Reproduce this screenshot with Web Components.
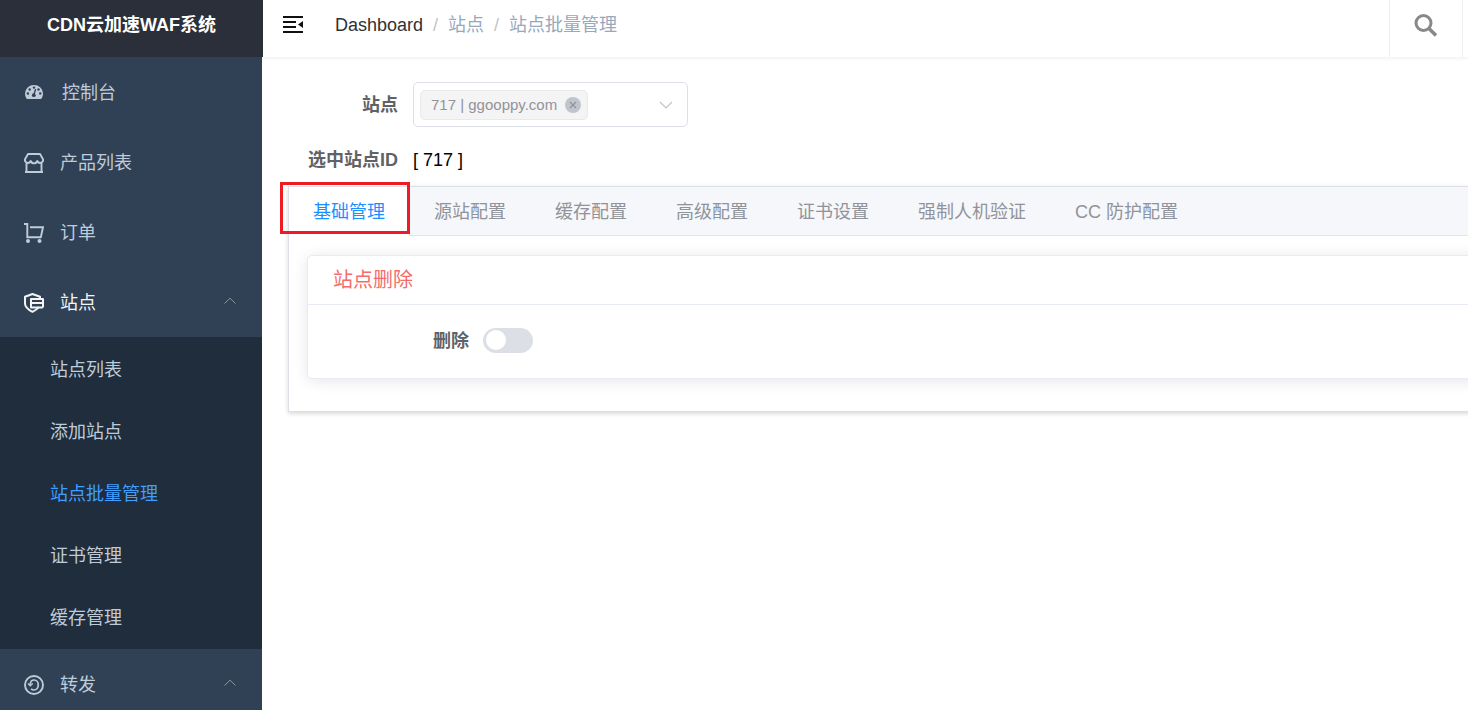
<!DOCTYPE html>
<html lang="zh-CN">
<head>
<meta charset="utf-8">
<meta name="viewport" content="width=device-width, initial-scale=1">
<title>CDN云加速WAF系统</title>
<style>
  body {
    margin: 0;
    color: #606266;
    font-family: "Liberation Sans", "Noto Sans CJK SC", sans-serif;
    font-size: 18px;
    line-height: 24px;
  }
</style>
</head>
<body>
<waf-app>
  <waf-sidebar slot="sidebar" title="CDN云加速WAF系统">
    <waf-menu-item icon="dashboard" label="控制台"></waf-menu-item>
    <waf-menu-item icon="shop" label="产品列表"></waf-menu-item>
    <waf-menu-item icon="cart" label="订单"></waf-menu-item>
    <waf-submenu icon="site" label="站点" open>
      <waf-submenu-item label="站点列表"></waf-submenu-item>
      <waf-submenu-item label="添加站点"></waf-submenu-item>
      <waf-submenu-item label="站点批量管理" active></waf-submenu-item>
      <waf-submenu-item label="证书管理"></waf-submenu-item>
      <waf-submenu-item label="缓存管理"></waf-submenu-item>
    </waf-submenu>
    <waf-submenu icon="forward" label="转发"></waf-submenu>
  </waf-sidebar>
  <waf-navbar slot="navbar"></waf-navbar>
  <waf-site-form></waf-site-form>
  <waf-tabs>
    <waf-card title="站点删除">
      <waf-switch label="删除"></waf-switch>
    </waf-card>
  </waf-tabs>
</waf-app>

<script>
const icons = {
  dashboard: `<svg width="22" height="20" viewBox="0 0 22 20">
    <path fill="currentColor" d="M1 10.500a9 8.500 0 0 1 18 0c0 1.800-.5 3.400-1.300 4.800-.2.400-.5.600-.9.600H3.200c-.4 0-.7-.2-.9-.6A9 9 0 0 1 1 10.500z"/>
    <g fill="#304156"><circle cx="3.900" cy="10.500" r="1.200"/><circle cx="5.700" cy="6.500" r="1.200"/><circle cx="10" cy="4.600" r="1.200"/><circle cx="14.500" cy="6.500" r="1.200"/><circle cx="16.200" cy="10.500" r="1.200"/><circle cx="9.800" cy="12.200" r="1.900"/></g>
    <path d="M9.800 12l1.700-5.500" stroke="#304156" stroke-width="1.300" stroke-linecap="round"/></svg>`,
  shop: `<svg width="20" height="20" viewBox="0 0 20 20" fill="none" stroke="currentColor" stroke-width="1.900" stroke-linejoin="round">
    <path d="M3.400 9.800C1.500 9.500.6 8 1 6.200L4 1h12l3 5.200c.4 1.800-.5 3.300-2.400 3.600"/>
    <path d="M3 9.800c1.900.6 3-.3 3.700-1.800.7 1.600 1.800 2.400 3.300 2.400s2.600-.8 3.300-2.400c.7 1.500 1.800 2.400 3.700 1.800"/>
    <path d="M2.500 9.500V19M17.500 9.500V19M1 19h18"/></svg>`,
  cart: `<svg width="20" height="20" viewBox="0 0 20 20" fill="none" stroke="currentColor" stroke-width="1.900">
    <path d="M0 1h3.300v13.200h13.500L19 4.300H6"/>
    <g fill="currentColor" stroke="none"><circle cx="4" cy="18" r="2"/><circle cx="15.500" cy="18" r="2"/></g></svg>`,
  site: `<svg width="20" height="20" viewBox="0 0 20 20" fill="none" stroke="currentColor" stroke-width="2" stroke-linejoin="round">
    <path d="M16 5.500V3.800L8.500 1 1 3.800v6.700c0 3.700 3.500 6.300 7.500 8.300 3-1.400 5-2.900 6.500-4.800"/>
    <path d="M7 6h12v7.500L18 14.500H7zM7 10h12"/></svg>`,
  forward: `<svg width="20" height="20" viewBox="0 0 20 20" fill="none" stroke="currentColor" stroke-width="1.900">
    <circle cx="10" cy="10" r="9"/>
    <path d="M6.200 9.500C6.400 6.500 8 5 10 5c2.600 0 4.300 2.200 4.300 5s-1.700 5-4.300 5c-1.200 0-2.200-.5-2.900-1.300" stroke-width="1.700"/>
    <path d="M4 8.500l2.200 2.300L8.700 8.500" stroke-width="1.500"/></svg>`,
  arrow: `<svg class="arrow" width="12" height="8" viewBox="0 0 12 8" fill="none" stroke="#909399"><path d="M.5 6.500L6 1.200l5.500 5.300"/></svg>`,
  fold: `<svg width="20" height="18" viewBox="0 0 20 18"><path fill="#111" d="M0 0h20v2H0zM0 5h13v2H0zM0 10h13v2H0zM0 15h20v2H0zM20 5v7l-5-3.500z"/></svg>`,
  search: `<svg width="24" height="24" viewBox="0 0 24 24" fill="none" stroke="#888"><circle cx="9.500" cy="9" r="7.500" stroke-width="3"/><path d="M15 14.500l7 7" stroke-width="3.600"/></svg>`,
};

class WafElement extends HTMLElement {
  constructor() {
    super();
    this.attachShadow({mode: 'open'});
  }

  connectedCallback() {
    const template = document.createElement('template');
    template.innerHTML = `<style>* { box-sizing: border-box; }</style>` + this.render();
    this.shadowRoot.replaceChildren(template.content.cloneNode(true));
  }

  get label() { return this.getAttribute('label') || '' }
}

class WafApp extends WafElement {
  render() {
    return `
      <style>
        :host {
          display: grid;
          grid-template-columns: 262px minmax(0, 1fr);
          height: 100vh;
          overflow: hidden;
          background: #fff;
        }
        .main {
          min-width: 0;
          overflow: hidden;
        }
        .content {
          padding: 25px 0 25px 26px;
        }
      </style>
      <slot name="sidebar"></slot>
      <div class="main">
        <slot name="navbar"></slot>
        <main class="content"><slot></slot></main>
      </div>
    `;
  }
}

class WafSidebar extends WafElement {
  render() {
    return `
      <style>
        :host {
          display: block;
          position: relative;
          z-index: 1;
          min-height: 0;
          background: #304156;
          color: #bfcbd9;
        }
        .logo {
          display: block;
          width: calc(100% + 1px);
          height: 57px;
          background: #2b2f3a;
          color: #fff;
          font-weight: bold;
          line-height: 50px;
          text-align: center;
          text-decoration: none;
        }
        nav {
          height: calc(100vh - 57px);
          overflow: hidden;
        }
      </style>
      <a class="logo" href="#">${this.getAttribute('title')}</a>
      <nav><slot></slot></nav>
    `;
  }
}

const itemStyle = `
  <style>
    :host {
      display: block;
    }
    .item {
      display: flex;
      align-items: center;
      gap: 16px;
      width: 100%;
      height: 70px;
      padding: 2px 26px 0 24px;
      border: 0;
      background: none;
      color: inherit;
      font: inherit;
      text-align: left;
      text-decoration: none;
      cursor: pointer;
    }
    .label {
      flex: 1;
    }
    svg {
      flex: none;
    }
    .arrow {
      margin-bottom: 4px;
    }
  </style>
`;

class WafMenuItem extends WafElement {
  render() {
    return `
      ${itemStyle}
      <a class="item" href="#">${icons[this.getAttribute('icon')]}<span class="label">${this.label}</span></a>
    `;
  }
}

class WafSubmenu extends WafElement {
  render() {
    const open = this.hasAttribute('open');
    return `
      ${itemStyle}
      <style>
        :host([open]) .item {
          color: #f4f4f5;
        }
        .children {
          padding-top: 2px;
          background: #1f2d3d;
        }
      </style>
      <button class="item" type="button" aria-expanded="${open}">
        ${icons[this.getAttribute('icon')]}<span class="label">${this.label}</span>${icons.arrow}
      </button>
      ${open ? '<div class="children"><slot></slot></div>' : ''}
    `;
  }
}

class WafSubmenuItem extends WafElement {
  render() {
    return `
      <style>
        :host {
          display: block;
        }
        a {
          display: block;
          padding-left: 50px;
          color: inherit;
          line-height: 62px;
          text-decoration: none;
        }
        :host([active]) a {
          color: #409eff;
        }
      </style>
      <a href="#">${this.label}</a>
    `;
  }
}

class WafNavbar extends WafElement {
  render() {
    return `
      <style>
        :host {
          display: flex;
          height: 57px;
          padding: 0 5px 0 21px;
          box-shadow: 0 1px 4px rgba(0, 21, 41, .08);
        }
        button {
          display: flex;
          padding: 0;
          border: 0;
          background: none;
          cursor: pointer;
        }
        .fold {
          align-items: center;
          height: 50px;
        }
        ol {
          display: flex;
          flex: 1;
          margin: 0;
          padding: 0 0 0 32px;
          list-style: none;
          line-height: 50px;
        }
        li + li::before {
          content: "/";
          margin: 0 10px;
          color: #c0c4cc;
        }
        li {
          color: #97a8be;
        }
        a {
          color: #303133;
          text-decoration: none;
        }
        .search {
          justify-content: center;
          width: 74px;
          padding-top: 14px;
          border: solid #eee;
          border-width: 0 1px;
        }
      </style>
      <button class="fold" type="button" aria-label="Toggle sidebar">${icons.fold}</button>
      <ol>
        <li><a href="#">Dashboard</a></li>
        <li>站点</li>
        <li>站点批量管理</li>
      </ol>
      <button class="search" type="button" aria-label="Search">${icons.search}</button>
    `;
  }
}

class WafSiteForm extends WafElement {
  render() {
    return `
      <style>
        :host {
          display: grid;
          grid-template-columns: 110px 275px;
          grid-auto-rows: 45px;
          align-items: center;
          gap: 10px 15px;
        }
        label, .label {
          font-weight: bold;
          text-align: right;
          white-space: nowrap;
        }
        .value {
          color: #000;
        }
        /* the tag sits under the transparent select, its close button above */
        .select {
          display: grid;
          grid-template-columns: 168px 1fr;
          align-items: center;
          position: relative;
          height: 45px;
          padding: 0 14px 0 6px;
          border: 1px solid #dcdfe6;
          border-radius: 5px;
        }
        .tag {
          display: flex;
          align-items: center;
          justify-content: flex-end;
          height: 30px;
          padding-right: 6px;
          border: 1px solid #e9e9eb;
          border-radius: 5px;
          background: #f4f4f5;
        }
        select {
          position: absolute;
          inset: 0;
          width: 100%;
          padding: 0 0 0 17px;
          border: 0;
          background: none;
          color: #909399;
          font: 15px "Liberation Sans", sans-serif;
          appearance: none;
        }
        .close {
          display: flex;
          z-index: 1;
          padding: 0;
          border: 0;
          background: none;
        }
        .arrow {
          justify-self: end;
        }
      </style>
      <label for="site">站点</label>
      <div class="select">
        <span class="tag">
          <button class="close" type="button" aria-label="移除">
            <svg width="16" height="16" viewBox="0 0 16 16"><circle cx="8" cy="8" r="8" fill="#c0c4cc"/><path d="M5 5l6 6M11 5l-6 6" stroke="#909399" stroke-width="1.200"/></svg>
          </button>
        </span>
        <select id="site"><option>717 | ggooppy.com</option></select>
        <svg class="arrow" width="14" height="8" viewBox="0 0 14 8" fill="none" stroke="#c0c4cc" stroke-width="1.200"><path d="M1 1l6 6 6-6"/></svg>
      </div>
      <span class="label">选中站点ID</span>
      <span class="value">[ 717 ]</span>
    `;
  }
}

class WafTabs extends WafElement {
  render() {
    const tabs = ['基础管理', '源站配置', '缓存配置', '高级配置', '证书设置', '强制人机验证', 'CC 防护配置'];
    return `
      <style>
        :host {
          display: block;
          margin: 4px -48px 0 0;
          border: 1px solid #dcdfe6;
          background: #fff;
          box-shadow: 0 2px 4px rgba(0, 0, 0, .12), 0 0 6px rgba(0, 0, 0, .04);
        }
        .tabs {
          display: flex;
          border-bottom: 1px solid #dfe4ed;
          background: #f5f7fa;
        }
        button {
          height: 49px;
          margin: 0 0 -1px -1px;
          padding: 0 24px;
          border: solid transparent;
          border-width: 0 1px;
          background: none;
          color: #909399;
          font: inherit;
          white-space: nowrap;
          cursor: pointer;
        }
        [aria-selected=true] {
          position: relative;
          border-color: #dcdfe6;
          background: #fff;
          color: #1890ff;
        }
        /* highlight frame round the current tab */
        [aria-selected=true]::after {
          content: "";
          position: absolute;
          inset: -5px -1px 2px -9px;
          border: 3px solid #ed1c24;
        }
        .panel {
          padding: 19px 18px 32px;
        }
      </style>
      <div class="tabs" role="tablist">
        ${tabs.map((tab, i) => `<button type="button" role="tab" aria-selected="${i === 0}">${tab}</button>`).join('')}
      </div>
      <div class="panel" role="tabpanel"><slot></slot></div>
    `;
  }
}

class WafCard extends WafElement {
  render() {
    return `
      <style>
        :host {
          display: block;
          border: 1px solid #e6ebf5;
          border-radius: 5px;
          background: #fff;
          box-shadow: 0 2px 15px rgba(0, 0, 0, .1);
        }
        h2 {
          margin: 0;
          padding: 0 25px;
          border-bottom: 1px solid #e6ebf5;
          color: #f56c6c;
          font-size: 20px;
          font-weight: normal;
          line-height: 48px;
        }
        .body {
          padding: 23px 25px 25px;
        }
      </style>
      <h2>${this.getAttribute('title')}</h2>
      <div class="body"><slot></slot></div>
    `;
  }
}

class WafSwitch extends WafElement {
  render() {
    return `
      <style>
        :host {
          display: flex;
          align-items: center;
          gap: 14px;
        }
        label {
          width: 136px;
          font-weight: bold;
          text-align: right;
        }
        input {
          width: 50px;
          height: 25px;
          margin: 0;
          padding: 2px 3px;
          border-radius: 13px;
          background: #dcdfe6;
          appearance: none;
          cursor: pointer;
        }
        input::before {
          content: "";
          display: block;
          width: 20px;
          height: 20px;
          border-radius: 50%;
          background: #fff;
        }
        input:checked {
          background: #1890ff;
        }
        input:checked::before {
          margin-left: auto;
        }
      </style>
      <label for="switch">${this.label}</label>
      <input id="switch" type="checkbox" role="switch">
    `;
  }
}

customElements.define('waf-app', WafApp);
customElements.define('waf-sidebar', WafSidebar);
customElements.define('waf-menu-item', WafMenuItem);
customElements.define('waf-submenu', WafSubmenu);
customElements.define('waf-submenu-item', WafSubmenuItem);
customElements.define('waf-navbar', WafNavbar);
customElements.define('waf-site-form', WafSiteForm);
customElements.define('waf-tabs', WafTabs);
customElements.define('waf-card', WafCard);
customElements.define('waf-switch', WafSwitch);
</script>
</body>
</html>
